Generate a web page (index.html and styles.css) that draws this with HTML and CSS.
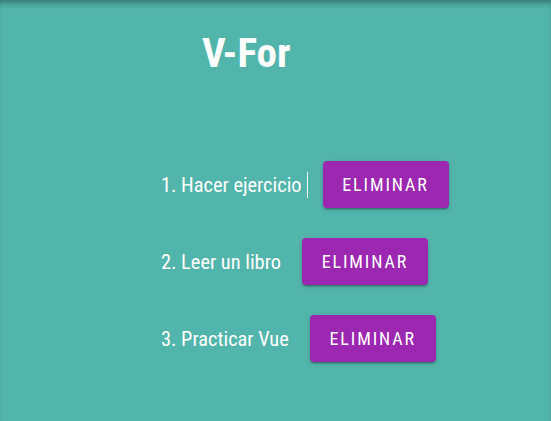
FILE: index.html
```html
<!DOCTYPE html>
<html lang="es">
<head>
<meta charset="utf-8">
<link rel="stylesheet" href="styles.css">
</head>
<body>
<div class="app">
  <h1 class="title">V-For</h1>
  <ol class="tasks">
    <li class="task"><span class="label caret">1. Hacer ejercicio</span><button class="btn">Eliminar</button></li>
    <li class="task"><span class="label">2. Leer un libro</span><button class="btn">Eliminar</button></li>
    <li class="task"><span class="label">3. Practicar Vue</span><button class="btn">Eliminar</button></li>
  </ol>
</div>
</body>
</html>
```
FILE: styles.css
```css
html, body {
  margin: 0;
  height: 100%;
}
body {
  background: #52b5ab;
  font-family: Roboto, "Liberation Sans", sans-serif;
  font-stretch: 75%;
  color: #ffffff;
  box-shadow: inset 0 6px 6px -3px rgba(0, 0, 0, 0.35);
}
.app {
  padding-top: 29px;
}
.title {
  margin: 0 0 0 202px;
  font-size: 41px;
  font-weight: 700;
  line-height: 48px;
  font-stretch: 75%;
}
.tasks {
  list-style: none;
  margin: 84px 0 0;
  padding: 0 0 0 161px;
  display: flex;
  flex-direction: column;
  gap: 30px;
}
.task {
  display: flex;
  align-items: center;
  height: 47px;
  font-size: 20.4px;
}
.label {
  position: relative;
}
.caret::after {
  content: "";
  position: absolute;
  right: -6px;
  top: -1px;
  bottom: -1px;
  width: 1px;
  background: #ffffff;
}
.btn {
  margin-left: 21px;
  width: 126px;
  height: 47px;
  border: 0;
  border-radius: 4px;
  background: #9c27b0;
  color: #ffffff;
  font-family: Roboto, "Liberation Sans", sans-serif;
  font-stretch: 75%;
  font-size: 18px;
  font-weight: 400;
  letter-spacing: 1.9px;
  text-transform: uppercase;
  box-shadow: 0 3px 1px -2px rgba(0,0,0,.2), 0 2px 2px 0 rgba(0,0,0,.14), 0 1px 5px 0 rgba(0,0,0,.12);
}
```
